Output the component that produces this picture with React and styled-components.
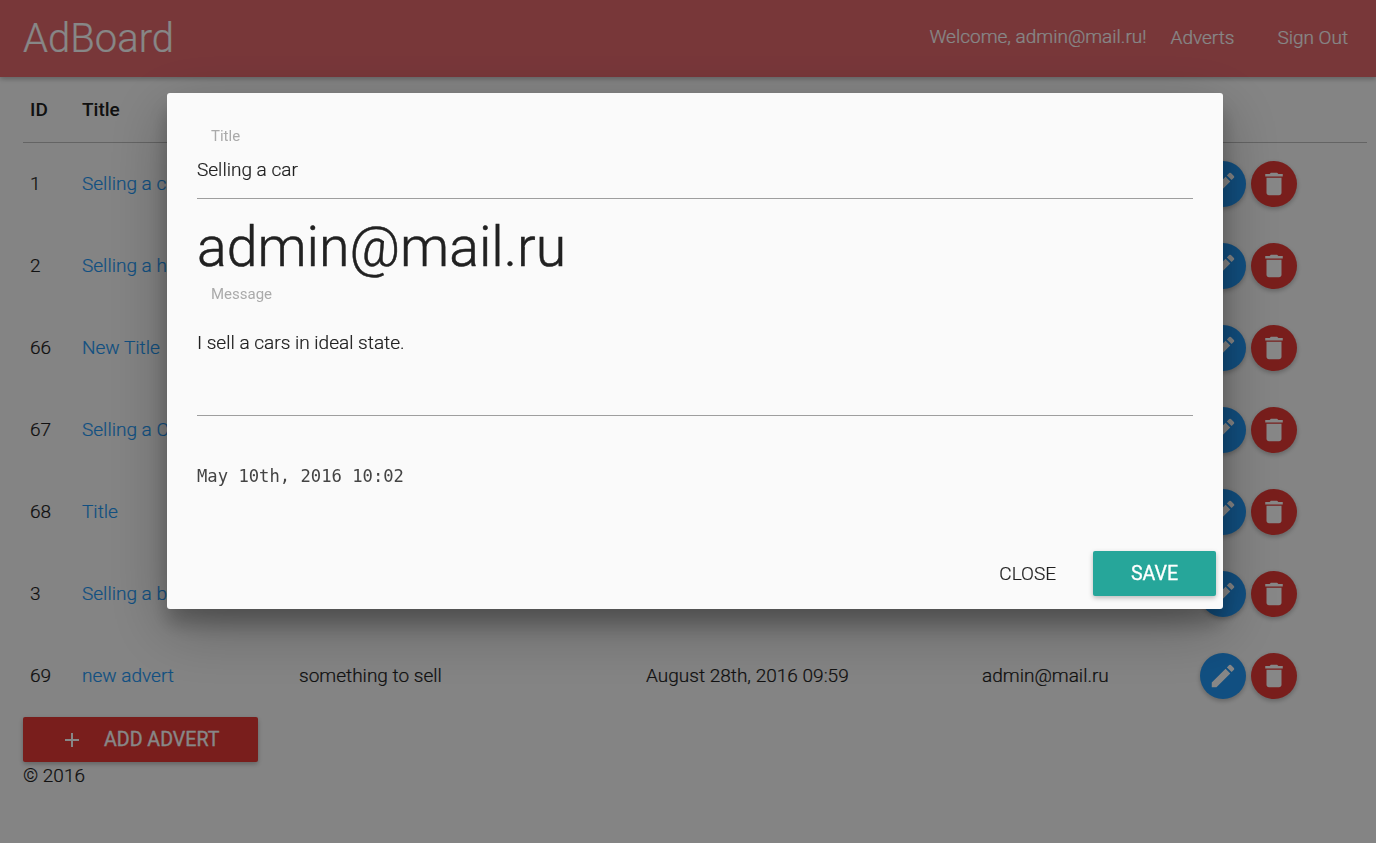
import React from "react";
import styled, { createGlobalStyle } from "styled-components";
import { MdEdit, MdDelete, MdAdd } from "react-icons/md";

const Global = createGlobalStyle`
  html, body { margin: 0; padding: 0; background: #fafafa; }
  body { font-family: Roboto, "Liberation Sans", sans-serif; font-weight: 300; font-size: 19.05px; color: #212121; overflow: hidden; -webkit-text-stroke: 0.2px currentColor; }
`;

const Header = styled.header`
  height: 77px; background: #e2686d; display: flex; align-items: center; padding: 0 28px 0 23px;
  box-shadow: 0 2px 5px rgba(0,0,0,.26); color: #fff;
`;
const Brand = styled.div`font-size: 40px; line-height: 72px; flex: 1;`;
const Welcome = styled.span`font-size: 19px; margin-right: 24px; margin-top: -5px;`;
const NavLink = styled.a`font-size: 19px; margin-left: ${p => p.$gap}px; margin-top: -3px;`;

const Main = styled.main`padding: 0 9px 0 23px;`;
const Table = styled.table`width: 100%; border-collapse: collapse; table-layout: fixed;`;
const Th = styled.th`
  box-sizing: border-box; text-align: left; font-weight: 500; height: 65px; padding: 0 0 0 7px; font-size: 19px; width: ${p => p.$w}px;
  border-bottom: 1px solid #bdbdbd; -webkit-text-stroke: 0;
`;
const Row = styled.tr`height: 82px;`;
const Td = styled.td`padding: 0 0 0 7px; font-size: 19.05px; white-space: nowrap; overflow: hidden;`;
const TitleLink = styled.a`color: #2196f3;`;
const Actions = styled.div`display: flex; gap: 5px; padding-top: 2px;`;
const Round = styled.button`
  width: 46px; height: 46px; border-radius: 50%; border: 0; padding: 0; color: #fff; display: flex;
  align-items: center; justify-content: center; background: ${p => p.$bg};
  box-shadow: 0 2px 5px rgba(0,0,0,.26);
`;
const AddButton = styled.button`
  width: 235px; height: 45px; display: flex; align-items: center; padding: 0 0 0 37px; gap: 20px; border: 0; border-radius: 2px;
  background: #e53935; color: #fff; font-family: inherit; font-weight: 400; font-size: 19.6px; text-transform: uppercase;
  -webkit-text-stroke: 0.3px currentColor;
  box-shadow: 0 2px 5px rgba(0,0,0,.26); margin-top: 1px;
`;
const Footer = styled.footer`font-size: 19px; line-height: 28px;`;

const Overlay = styled.div`
  position: fixed; inset: 0; background: rgba(0,0,0,.47); display: flex; justify-content: center; align-items: flex-start;
  padding: 93px 153px 0 167px; box-sizing: border-box;
`;
const Modal = styled.div`
  width: 1056px; height: 516px; box-sizing: border-box; background: #fafafa; border-radius: 3px; display: flex; flex-direction: column;
  padding: 0 30px; position: relative; flex: none;
  box-shadow: 0 19px 60px rgba(0,0,0,.3), 0 15px 20px rgba(0,0,0,.22);
`;
const Field = styled.div`border-bottom: 1px solid #9e9e9e; height: ${p => p.$h}px; display: flex; flex-direction: column;`;
const Label = styled.label`font-size: 15px; font-weight: 400; color: #aaa; padding-left: 14px; line-height: 16px; margin-top: ${p => p.$t}px; -webkit-text-stroke: 0;`;
const Value = styled.div`font-size: 19.05px; line-height: 24px; margin-top: ${p => p.$t}px;`;
const Author = styled.h1`font-size: 55.4px; font-weight: 300; line-height: 60px; margin: 19px 0 0; color: #212121; -webkit-text-stroke: 0.5px currentColor;`;
const DateText = styled.div`font-family: "DejaVu Sans Mono", monospace; font-weight: 400; font-size: 17.2px; line-height: 22px; margin-top: 49px; color: #444; -webkit-text-stroke: 0;`;
const ModalActions = styled.div`
  position: absolute; right: 7px; bottom: 13px; display: flex; align-items: center; gap: 37px;
`;
const CloseButton = styled.button`
  border: 0; background: none; padding: 0; font-family: inherit; font-weight: 300; font-size: 19px; color: #212121; text-transform: uppercase;
  -webkit-text-stroke: 0.2px currentColor;
`;
const SaveButton = styled.button`
  width: 123px; height: 45px; border: 0; border-radius: 2px; background: #26a69a; color: #fff; font-family: inherit; font-weight: 400;
  font-size: 19.6px; text-transform: uppercase; box-shadow: 0 2px 5px rgba(0,0,0,.26); -webkit-text-stroke: 0.3px currentColor;
`;

const rows = [
  [1, "Selling a car", "I sell a cars", "May 10th, 2016 10:02", "admin@mail.ru"],
  [2, "Selling a house", "I sell a house", "May 10th, 2016 10:04", "admin@mail.ru"],
  [66, "New Title", "New message", "August 20th, 2016 09:12", "admin@mail.ru"],
  [67, "Selling a Car", "Good car", "August 20th, 2016 09:20", "admin@mail.ru"],
  [68, "Title", "Message", "August 20th, 2016 09:31", "admin@mail.ru"],
  [3, "Selling a bike", "I sell a bike", "May 10th, 2016 10:10", "admin@mail.ru"],
  [69, "new advert", "something to sell", "August 28th, 2016 09:59", "admin@mail.ru"],
];

export default function App() {
  return (
    <>
      <Global />
      <Header>
        <Brand>AdBoard</Brand>
        <Welcome>Welcome, admin@mail.ru!</Welcome>
        <NavLink $gap={0}>Adverts</NavLink>
        <NavLink $gap={43}>Sign Out</NavLink>
      </Header>
      <Main>
        <Table>
          <thead>
            <tr>
              <Th $w={52}>ID</Th>
              <Th $w={217}>Title</Th>
              <Th $w={347}>Message</Th>
              <Th $w={336}>Date</Th>
              <Th $w={218}>Author</Th>
              <Th />
            </tr>
          </thead>
          <tbody>
            {rows.map(r => (
              <Row key={r[0]}>
                <Td>{r[0]}</Td>
                <Td><TitleLink>{r[1]}</TitleLink></Td>
                <Td>{r[2]}</Td>
                <Td>{r[3]}</Td>
                <Td>{r[4]}</Td>
                <Td>
                  <Actions>
                    <Round $bg="#2196f3"><MdEdit size={30} /></Round>
                    <Round $bg="#e53935"><MdDelete size={30} /></Round>
                  </Actions>
                </Td>
              </Row>
            ))}
          </tbody>
        </Table>
        <AddButton><MdAdd size={24} />Add advert</AddButton>
        <Footer>© 2016</Footer>
      </Main>
      <Overlay>
        <Modal>
          <Field $h={105}>
            <Label $t={35}>Title</Label>
            <Value $t={14}>Selling a car</Value>
          </Field>
          <Author>admin@mail.ru</Author>
          <Label $t={8}>Message</Label>
          <Field $h={113}>
            <Value $t={29}>I sell a cars in ideal state.</Value>
          </Field>
          <DateText>May 10th, 2016 10:02</DateText>
          <ModalActions>
            <CloseButton>Close</CloseButton>
            <SaveButton>Save</SaveButton>
          </ModalActions>
        </Modal>
      </Overlay>
    </>
  );
}
